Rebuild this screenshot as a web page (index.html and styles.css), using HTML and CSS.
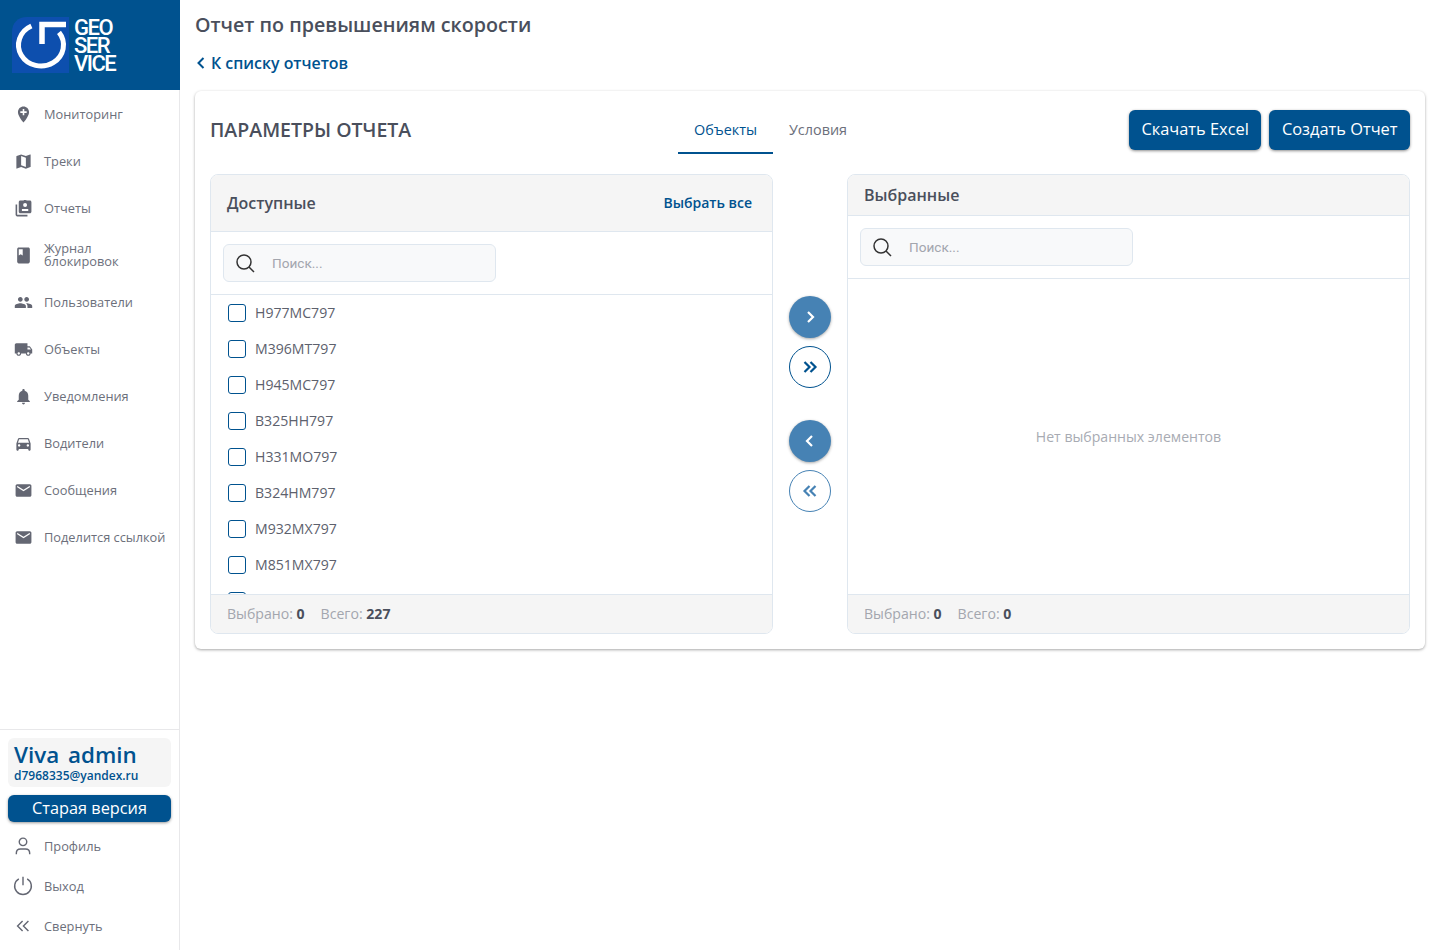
FILE: index.html
```html
<!DOCTYPE html>
<html lang="ru">
<head>
    <meta charset="UTF-8">
    <title>Отчет по превышениям скорости</title>
    <link rel="stylesheet" href="styles.css">
</head>
<body>
    <aside class="sidebar">
        <div class="logo">
            <svg class="logo-mark" width="57" height="56" viewBox="0 0 57 56">
                <path d="M15 0H57V56H0V15C0 6 6 0 15 0Z" fill="#0d4fae"/>
                <path d="M19.400 9A22.500 21 0 1 0 47 15.400" fill="none" stroke="#fff" stroke-width="5"/>
                <path d="M30 27V7.500H54" fill="none" stroke="#fff" stroke-width="5.500"/>
            </svg>
            <div class="logo-text">GEO<br>SER<br>VICE</div>
        </div>

        <nav class="menu">
            <a class="menu-item"><svg viewBox="0 0 24 24"><path d="M12 2C8.14 2 5 5.14 5 9c0 5.25 7 13 7 13s7-7.75 7-13c0-3.86-3.14-7-7-7zm4 8h-3v3h-2v-3H8V8h3V5h2v3h3v2z"/></svg><span>Мониторинг</span></a>
            <a class="menu-item"><svg viewBox="0 0 24 24"><path d="M20.5 3l-.16.03L15 5.1 9 3 3.36 4.9c-.21.07-.36.25-.36.48V20.5c0 .28.22.5.5.5l.16-.03L9 18.9l6 2.1 5.64-1.9c.21-.07.36-.25.36-.48V3.5c0-.28-.22-.5-.5-.5zM15 19l-6-2.11V5l6 2.11V19z"/></svg><span>Треки</span></a>
            <a class="menu-item"><svg viewBox="0 0 24 24"><path fill-rule="evenodd" d="M4 7H2v13c0 1.1.9 2 2 2h13v-2H4V7zm16-5h-4.2C15.4 1 14.3 1.500 14 1.500S12.600 1 12.200 2H8c-1.100 0-2 .9-2 2v12c0 1.100.9 2 2 2h12c1.100 0 2-.9 2-2V4c0-1.100-.9-2-2-2zM14 5a2.500 2.500 0 1 1 0 5 2.500 2.500 0 0 1 0-5zm-4 7.500h8V15h-8v-2.500z"/></svg><span>Отчеты</span></a>
            <a class="menu-item"><svg viewBox="0 0 24 24"><path d="M18 2H6c-1.100 0-2 .9-2 2v16c0 1.100.9 2 2 2h12c1.100 0 2-.9 2-2V4c0-1.100-.9-2-2-2zM6 4h5v8l-2.500-1.500L6 12V4z"/></svg><span class="two-lines">Журнал<br>блокировок</span></a>
            <a class="menu-item"><svg viewBox="0 0 24 24"><path d="M16 11c1.660 0 2.990-1.340 2.990-3S17.660 5 16 5c-1.660 0-3 1.340-3 3s1.340 3 3 3zm-8 0c1.660 0 2.990-1.340 2.990-3S9.660 5 8 5C6.340 5 5 6.340 5 8s1.340 3 3 3zm0 2c-2.330 0-7 1.170-7 3.500V19h14v-2.500c0-2.330-4.670-3.500-7-3.500zm8 0c-.29 0-.62.02-.97.05 1.160.84 1.970 1.970 1.970 3.450V19h6v-2.500c0-2.330-4.670-3.500-7-3.500z"/></svg><span>Пользователи</span></a>
            <a class="menu-item"><svg viewBox="0 0 24 24"><path d="M20 8h-3V4H3c-1.100 0-2 .9-2 2v11h2c0 1.660 1.340 3 3 3s3-1.340 3-3h6c0 1.660 1.340 3 3 3s3-1.340 3-3h2v-5l-3-4zM6 18.500c-.83 0-1.500-.67-1.500-1.500s.67-1.500 1.500-1.500 1.500.67 1.500 1.500-.67 1.500-1.500 1.500zm13.500-9l1.960 2.500H17V9.500h2.500zm-1.500 9c-.83 0-1.500-.67-1.500-1.500s.67-1.500 1.500-1.500 1.500.67 1.500 1.500-.67 1.500-1.500 1.500z"/></svg><span>Объекты</span></a>
            <a class="menu-item"><svg viewBox="0 0 24 24"><path d="M12 22c1.100 0 2-.9 2-2h-4c0 1.100.89 2 2 2zm6-6v-5c0-3.070-1.640-5.640-4.500-6.320V4c0-.83-.67-1.500-1.500-1.500s-1.500.67-1.500 1.500v.68C7.630 5.360 6 7.920 6 11v5l-2 2v1h16v-1l-2-2z"/></svg><span>Уведомления</span></a>
            <a class="menu-item"><svg viewBox="0 0 24 24"><path d="M18.920 6.010C18.720 5.420 18.160 5 17.500 5h-11c-.66 0-1.210.42-1.420 1.010L3 12v8c0 .55.45 1 1 1h1c.55 0 1-.45 1-1v-1h12v1c0 .55.45 1 1 1h1c.55 0 1-.45 1-1v-8l-2.080-5.990zM6.500 16c-.83 0-1.500-.67-1.500-1.500S5.670 13 6.500 13s1.500.67 1.500 1.500S7.330 16 6.500 16zm11 0c-.83 0-1.500-.67-1.500-1.500s.67-1.500 1.500-1.500 1.500.67 1.500 1.500-.67 1.500-1.500 1.500zM5 11l1.500-4.500h11L19 11H5z"/></svg><span>Водители</span></a>
            <a class="menu-item"><svg viewBox="0 0 24 24"><path d="M20 4H4c-1.100 0-1.990.9-1.990 2L2 18c0 1.100.9 2 2 2h16c1.100 0 2-.9 2-2V6c0-1.100-.9-2-2-2zm0 4l-8 5-8-5V6l8 5 8-5v2z"/></svg><span>Сообщения</span></a>
            <a class="menu-item"><svg viewBox="0 0 24 24"><path d="M20 4H4c-1.100 0-1.990.9-1.990 2L2 18c0 1.100.9 2 2 2h16c1.100 0 2-.9 2-2V6c0-1.100-.9-2-2-2zm0 4l-8 5-8-5V6l8 5 8-5v2z"/></svg><span>Поделится ссылкой</span></a>
        </nav>

        <div class="sidebar-bottom">
            <div class="user-box">
                <div class="user-name">Viva admin</div>
                <div class="user-mail">d7968335@yandex.ru</div>
            </div>
            <button class="old-version">Старая версия</button>
            <a class="bottom-item"><svg class="line-icon" viewBox="0 0 24 24"><circle cx="12" cy="7" r="4.500"/><path d="M4 22v-1.500c0-3 2-5 5-5h6c3 0 5 2 5 5V22"/></svg><span>Профиль</span></a>
            <a class="bottom-item"><svg class="line-icon" viewBox="0 0 24 24"><path d="M7 3.500a10 10 0 1 0 10 0M12 1V11"/></svg><span>Выход</span></a>
            <a class="bottom-item"><svg class="line-icon" viewBox="0 0 24 24"><path d="M11.500 6l-6 6 6 6M18.500 6l-6 6 6 6"/></svg><span>Свернуть</span></a>
        </div>
    </aside>

    <main class="content">
        <h1 class="page-title">Отчет по превышениям скорости</h1>
        <a class="back-link"><svg viewBox="0 0 12 16"><path d="M8.500 3L3.500 8l5 5"/></svg>К списку отчетов</a>

        <section class="card">
            <div class="card-head">
                <h2 class="card-title">ПАРАМЕТРЫ ОТЧЕТА</h2>
                <div class="tabs">
                    <div class="tab active">Объекты</div>
                    <div class="tab">Условия</div>
                </div>
                <div class="actions">
                    <button class="btn">Скачать Excel</button>
                    <button class="btn">Создать Отчет</button>
                </div>
            </div>

            <div class="transfer">
                <div class="panel">
                    <div class="panel-head tall">
                        <span>Доступные</span>
                        <a class="select-all">Выбрать все</a>
                    </div>
                    <div class="search-row">
                        <div class="search">
                            <svg viewBox="0 0 20 20"><circle cx="9" cy="9" r="7"/><path d="M14 14l5 5"/></svg>
                            <span>Поиск...</span>
                        </div>
                    </div>
                    <div class="list">
                        <label class="row"><i class="check"></i>Н977МС797</label>
                        <label class="row"><i class="check"></i>М396МТ797</label>
                        <label class="row"><i class="check"></i>Н945МС797</label>
                        <label class="row"><i class="check"></i>В325НН797</label>
                        <label class="row"><i class="check"></i>Н331МО797</label>
                        <label class="row"><i class="check"></i>В324НМ797</label>
                        <label class="row"><i class="check"></i>М932МХ797</label>
                        <label class="row"><i class="check"></i>М851МХ797</label>
                        <label class="row"><i class="check"></i></label>
                    </div>
                    <div class="panel-foot">
                        <span>Выбрано: <b>0</b></span>
                        <span>Всего: <b>227</b></span>
                    </div>
                </div>

                <div class="arrows">
                    <button class="round filled"><svg viewBox="0 0 16 16"><path d="M6 3L11 8 6 13"/></svg></button>
                    <button class="round outline"><svg viewBox="0 0 16 16"><path d="M2.500 3L7.500 8l-5 5M8.500 3l5 5-5 5"/></svg></button>
                    <button class="round filled second"><svg viewBox="0 0 16 16"><path d="M10 3L5 8l5 5"/></svg></button>
                    <button class="round outline faded"><svg viewBox="0 0 16 16"><path d="M7.500 3l-5 5 5 5M13.500 3l-5 5 5 5"/></svg></button>
                </div>

                <div class="panel">
                    <div class="panel-head">
                        <span>Выбранные</span>
                    </div>
                    <div class="search-row">
                        <div class="search">
                            <svg viewBox="0 0 20 20"><circle cx="9" cy="9" r="7"/><path d="M14 14l5 5"/></svg>
                            <span>Поиск...</span>
                        </div>
                    </div>
                    <div class="empty">Нет выбранных элементов</div>
                    <div class="panel-foot">
                        <span>Выбрано: <b>0</b></span>
                        <span>Всего: <b>0</b></span>
                    </div>
                </div>
            </div>
        </section>
    </main>
</body>
</html>
```

FILE: styles.css
```css
* {
    box-sizing: border-box;
}
html, body {
    height: 100%;
}
body {
    margin: 0;
    display: flex;
    overflow: hidden;
    background: #fff;
    color: #4a4f5c;
    font-family: "Open Sans", "Noto Sans", sans-serif;
}
button {
    font-family: inherit;
    border: none;
    cursor: pointer;
}

/* sidebar */
.sidebar {
    width: 180px;
    height: 950px;
    flex-shrink: 0;
    display: flex;
    flex-direction: column;
    border-right: 1px solid #e8e8ea;
}
.logo {
    height: 90px;
    margin-right: -1px;
    padding: 17px 0 0 12px;
    display: flex;
    gap: 5px;
    background: #00528f;
}
.logo-text {
    color: #fff;
    font-family: Roboto, sans-serif;
    font-size: 22px;
    font-weight: 500;
    line-height: 18px;
    letter-spacing: -1.5px;
    margin-top: 2px;
}
.menu {
    flex: 1;
    padding-top: 1px;
}
.menu-item {
    height: 47px;
    padding-left: 14px;
    display: flex;
    align-items: center;
    gap: 11px;
    color: #6c6f7b;
    font-size: 12.8px;
    line-height: 13px;
}
.menu-item svg {
    width: 19px;
    height: 19px;
    flex-shrink: 0;
    fill: #646773;
}
.two-lines {
    margin-bottom: 2px;
}
.sidebar-bottom {
    border-top: 1px solid #e8e8ea;
    padding-top: 8px;
    height: 221px;
}
.user-box {
    margin: 0 8px;
    height: 49px;
    padding: 3px 6px;
    background: #f5f5f5;
    border-radius: 6px;
    color: #00528f;
}
.user-name {
    font-size: 22.4px;
    font-weight: 600;
    line-height: 28px;
    word-spacing: 3px;
}
.user-mail {
    font-size: 12px;
    font-weight: 600;
    line-height: 14px;
}
.old-version {
    display: block;
    width: 163px;
    height: 27px;
    margin: 8px 8px 4px;
    padding: 0 0 2px;
    background: #00528f;
    color: #fff;
    font-size: 16.3px;
    border-radius: 6px;
    box-shadow: 0 1px 3px rgba(0, 0, 0, .4);
}
.bottom-item {
    height: 40px;
    padding-left: 13px;
    display: flex;
    align-items: center;
    gap: 11px;
    color: #6c6f7b;
    font-size: 12.8px;
}
.line-icon {
    width: 20px;
    height: 20px;
    fill: none;
    stroke: #646773;
    stroke-width: 1.700;
}

/* main */
.content {
    flex: 1;
    padding: 0 15px;
}
.page-title {
    margin: 11px 0 0;
    font-size: 19.7px;
    font-weight: 600;
    line-height: 28px;
}
.back-link {
    margin-top: 10px;
    display: flex;
    align-items: center;
    gap: 4px;
    height: 28px;
    color: #00528f;
    font-size: 15.9px;
    font-weight: 600;
}
.back-link svg {
    width: 12px;
    height: 16px;
    fill: none;
    stroke: #00528f;
    stroke-width: 2;
}
.card {
    margin-top: 14px;
    height: 558px;
    padding: 19px 15px 15px;
    background: #fff;
    border-radius: 6px;
    box-shadow: 0 1px 3px rgba(0, 0, 0, .35);
}
.card-head {
    height: 64px;
    display: flex;
    align-items: flex-start;
}
.card-title {
    width: 468px;
    margin: 0;
    font-size: 19.5px;
    font-weight: 600;
    line-height: 40px;
}
.tabs {
    display: flex;
}
.tab {
    height: 44px;
    padding: 0 16px;
    font-size: 14.4px;
    line-height: 40px;
    color: #6c6f7b;
}
.tab.active {
    color: #00528f;
    border-bottom: 2px solid #00528f;
}
.actions {
    margin-left: auto;
    display: flex;
    gap: 8px;
}
.btn {
    height: 40px;
    padding: 0 12.500px 4px;
    background: #00528f;
    color: #fff;
    font-size: 16.4px;
    border-radius: 6px;
    box-shadow: 0 1px 3px rgba(0, 0, 0, .45);
}
.transfer {
    display: flex;
    height: 460px;
}
.panel {
    width: 563px;
    display: flex;
    flex-direction: column;
    border: 1px solid #dfe7ef;
    border-radius: 8px;
    overflow: hidden;
}
.panel-head {
    height: 41px;
    padding: 0 20px 0 16px;
    flex-shrink: 0;
    display: flex;
    align-items: center;
    justify-content: space-between;
    background: #f5f5f5;
    border-bottom: 1px solid #dfe7ef;
    font-size: 16px;
    font-weight: 600;
}
.panel-head.tall {
    height: 57px;
}
.select-all {
    margin-bottom: 2px;
    color: #00528f;
    font-size: 14px;
    font-weight: 600;
}
.search-row {
    height: 63px;
    flex-shrink: 0;
    padding: 12px;
    border-bottom: 1px solid #dfe7ef;
}
.search {
    width: 273px;
    height: 38px;
    padding-left: 11px;
    display: flex;
    align-items: center;
    gap: 17px;
    background: #f8f9fa;
    border: 1px solid #dfe7ef;
    border-radius: 6px;
    color: #a3a6ae;
    font-family: Roboto, sans-serif;
    font-size: 13.6px;
}
.search svg {
    width: 20px;
    height: 20px;
    fill: none;
    stroke: #333;
    stroke-width: 1.500;
}
.list {
    flex: 1;
    overflow: hidden;
}
.row {
    height: 36px;
    padding: 0 0 2px 17px;
    display: flex;
    align-items: center;
    gap: 9px;
    font-size: 14.1px;
    color: #5d616d;
}
.check {
    width: 18px;
    height: 18px;
    margin-top: 2px;
    border: 1px solid #00528f;
    border-radius: 3px;
}
.panel-foot {
    height: 39px;
    flex-shrink: 0;
    padding: 0 0 2px 16px;
    display: flex;
    align-items: center;
    gap: 16px;
    background: #f5f5f5;
    border-top: 1px solid #dfe7ef;
    font-size: 14.1px;
    color: #a3a6ae;
}
.panel-foot b {
    color: #4a4f5c;
    font-weight: 700;
}
.empty {
    flex: 1;
    display: flex;
    align-items: center;
    justify-content: center;
    font-size: 14.1px;
    color: #a8abb3;
}
.arrows {
    width: 74px;
    flex-shrink: 0;
    display: flex;
    flex-direction: column;
    align-items: center;
    justify-content: center;
    gap: 8px;
}
.round {
    width: 42px;
    height: 42px;
    padding: 0;
    display: flex;
    align-items: center;
    justify-content: center;
    border-radius: 50%;
}
.round svg {
    width: 16px;
    height: 16px;
    fill: none;
    stroke-width: 2.200;
}
.round.filled {
    background: #4682b4;
    box-shadow: 0 1px 3px rgba(0, 0, 0, .35);
}
.round.filled svg {
    stroke: #fff;
}
.round.second {
    margin-top: 24px;
}
.round.outline {
    background: #fff;
    border: 1px solid #00528f;
}
.round.outline svg {
    stroke: #00528f;
}
.round.faded {
    border-color: #4682b4;
}
.round.faded svg {
    stroke: #4682b4;
}
```
